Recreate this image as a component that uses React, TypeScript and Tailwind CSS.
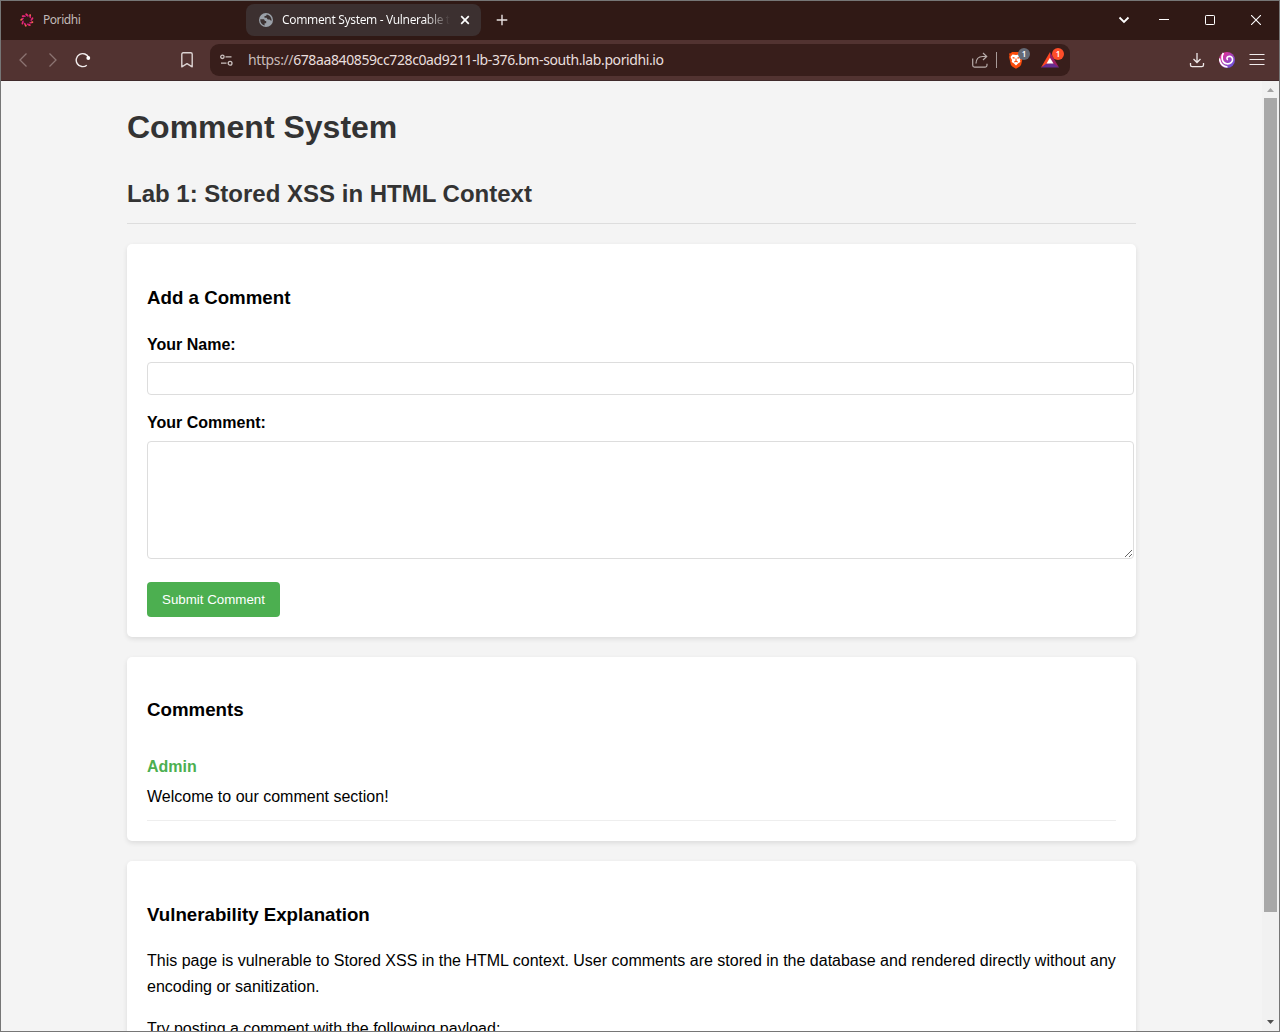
import React from "react";

const card = "mb-5 flow-root rounded-[5px] bg-white p-5 shadow-[0_2px_5px_rgba(0,0,0,0.1)]";

function PoridhiLogo() {
  return (
    <svg width="14" height="14" viewBox="0 0 14 14" className="shrink-0">
      {[0, 40, 80, 120, 160, 200, 240, 280, 320].map((a, i) => (
        <g key={a} transform={`rotate(${a} 7 7)`}>
          <path d="M6.100 1.200l.9.800" stroke={i % 2 ? "#f56a4a" : "#f0306a"} strokeWidth="1.700" strokeLinecap="round" />
          <path d="M7.300 2.300l.6.600" stroke="#d61a83" strokeWidth="1.500" strokeLinecap="round" />
        </g>
      ))}
    </svg>
  );
}

function Globe() {
  return (
    <svg width="14" height="14" viewBox="0 0 14 14" className="shrink-0">
      <circle cx="7" cy="7" r="7" fill="#9aa0a8" />
      <path d="M1.3 6.3h2.6c1.5 0 1.9.7 1.9 1.6h1.4v2.3H5.6v2.2C3 12 1.3 9.8 1.3 7.3zM7.7 1.4c-.1 1.3-.9 1.6-2.2 1.6v1.7h2.2c.3 1.2 1.1 1.9 2.2 1.9h.8c.3.8.9 1.1 1.9 1.1C12.700 4.500 10.500 1.700 7.700 1.400z" fill="#3c3232" />
    </svg>
  );
}

function TabStrip() {
  return (
    <div className="flex h-[39px] shrink-0 items-start bg-[#301915] text-[12px] text-white">
      <div className="flex h-[38px] w-[245px] items-center pl-[19px] text-[#c1b9b8]">
        <PoridhiLogo />
        <span className="ml-[9px] tracking-[-0.45px]">Poridhi</span>
      </div>
      <div className="mt-[3px] flex h-8 w-[235px] items-center rounded-lg bg-[#3c3030] pl-[13px]">
        <Globe />
        <span className="ml-[9px] w-[168px] overflow-hidden whitespace-nowrap bg-gradient-to-r from-white from-85% to-transparent bg-clip-text tracking-[-0.34px] text-transparent">
          Comment System - Vulnerable to XSS
        </span>
        <svg width="10" height="10" viewBox="0 0 10 10" className="ml-[10px]" stroke="#fff" strokeWidth="1.7">
          <path d="M1.200 1.200l7.600 7.600M8.800 1.200l-7.600 7.600" />
        </svg>
      </div>
      <svg width="12" height="12" viewBox="0 0 12 12" className="ml-[15px] mt-[13px]" stroke="#e8e2e1" strokeWidth="1.4">
        <path d="M6 .7v10.600M.7 6h10.600" />
      </svg>
      <div className="ml-auto flex h-[38px] items-center pr-[18px]">
        <svg width="12" height="8" viewBox="0 0 12 8" fill="none" stroke="#fff" strokeWidth="1.8" className="mr-[29px]">
          <path d="M1.500 1.500L6 6l4.500-4.500" />
        </svg>
        <svg width="10" height="12" viewBox="0 0 10 12" stroke="#fff" className="mr-9">
          <path d="M0 5.500h10" />
        </svg>
        <svg width="10" height="10" viewBox="0 0 10 10" fill="none" stroke="#fff" className="mr-9">
          <rect x=".5" y=".5" width="9" height="9" rx=".7" />
        </svg>
        <svg width="10" height="10" viewBox="0 0 10 10" stroke="#fff" strokeWidth="1.100">
          <path d="M0 0l10 10M10 0L0 10" />
        </svg>
      </div>
    </div>
  );
}

function BraveLion() {
  return (
    <svg width="16" height="18" viewBox="0 0 16 18">
      <path d="M4 1h8l1.200 1.200 1.800.3-.5 2 .4 1.500-1.700 7.500c-.3 1-1 1.700-1.800 2.200L8 17.700l-3.400-2c-.8-.5-1.500-1.200-1.800-2.200L1.100 6l.4-1.500-.5-2 1.800-.3z" fill="#fb4b0b" />
      <path d="M4.500 3.500L8 4l3.500-.5L13.500 6l-1.500 3 .3 2-2 1.200L8 14.500l-2.300-2.300-2-1.200.3-2L2.500 6z" fill="#fff" />
      <path d="M4.600 6.600l2 .5M11.400 6.600l-2 .5M8 7.500v2.200M6.300 11L8 10.200l1.700.8" stroke="#fb4b0b" strokeWidth="1.100" fill="none" />
    </svg>
  );
}

function Toolbar() {
  return (
    <div className="flex h-[41px] shrink-0 items-center border-b border-[#402a2b] bg-[#523331] pb-px">
      <svg width="10" height="14" viewBox="0 0 10 14" fill="none" stroke="#8c7472" strokeWidth="1.300" className="ml-[17px]">
        <path d="M8.500.5L2 7l6.500 6.500" />
      </svg>
      <svg width="10" height="14" viewBox="0 0 10 14" fill="none" stroke="#8c7472" strokeWidth="1.300" className="ml-5">
        <path d="M1.500.5L8 7l-6.500 6.500" />
      </svg>
      <svg width="16" height="16" viewBox="0 0 16 16" fill="none" className="ml-[17px]">
        <path d="M11.800 13.200A6.500 6.500 0 1 1 13.700 5.600" stroke="#f3eeee" strokeWidth="1.400" />
        <circle cx="13.300" cy="6" r="1.900" fill="#fff" />
      </svg>
      <svg width="12" height="16" viewBox="0 0 12 16" fill="none" stroke="#dcd3d2" strokeWidth="1.400" strokeLinejoin="round" className="ml-[90px]">
        <path d="M.8 2.200Q.8.8 2.200.8h7.600q1.400 0 1.400 1.400v12.600L6 11.600.8 14.800z" />
      </svg>
      <div className="ml-[17px] flex h-8 w-[860px] items-center rounded-[9px] bg-[#381e1b] pl-[10px]">
        <svg width="13" height="12" viewBox="0 0 13 12" fill="none" stroke="#cbc1bf" strokeWidth="1.300">
          <circle cx="2.400" cy="2.800" r="1.700" />
          <circle cx="10.100" cy="9.200" r="1.900" />
          <path d="M5.500 2.800h6M1 9.200h5.500" />
        </svg>
        <span className="ml-[15px] whitespace-nowrap text-[14px] tracking-[-0.39px] text-[#e9dfde]">
          <span className="text-[#c7bab8]">https://</span>678aa840859cc728c0ad9211-lb-376.bm-south.lab.poridhi.io
        </span>
        <div className="ml-auto flex items-center">
          <svg width="16" height="16" viewBox="0 0 16 16" fill="none" stroke="#b9adab" strokeWidth="1.200">
            <path d="M.7 6.500v6.800q0 1.800 1.800 1.800h10.700q1.800 0 1.800-1.800v-1.500" />
            <path d="M4 11.500c.2-4.500 2.500-7 6.500-7h3.500M11 1l3.700 3.500L11 8" />
          </svg>
          <div className="ml-[8px] h-[16px] w-px bg-[#a89b99]" />
          <div className="relative ml-[11px]">
            <BraveLion />
            <div className="absolute left-[10px] top-[-3px] flex h-3 w-3 items-center justify-center rounded-full bg-[#646975] text-[8px] font-semibold leading-none text-white">1</div>
          </div>
          <div className="relative ml-[17px] mr-[11px]">
            <svg width="18" height="16" viewBox="0 0 18 16">
              <path d="M9 0L0 15.500l9-4z" fill="#ff4724" />
              <path d="M9 0l9 15.500-9-4z" fill="#9e1f63" />
              <path d="M0 15.500h18l-5.500-4h-7z" fill="#662d91" />
              <path d="M9 5.700l3.500 5.900h-7z" fill="#fff" />
            </svg>
            <div className="absolute left-[11px] top-[-4px] flex h-3 w-3 items-center justify-center rounded-full bg-[#ff4d29] text-[8px] font-semibold leading-none text-white">1</div>
          </div>
        </div>
      </div>
      <svg width="16" height="16" viewBox="0 0 16 16" fill="none" stroke="#efe9e8" strokeWidth="1.300" className="ml-[119px]">
        <path d="M8 1v9.500M4.500 7L8 10.500 11.500 7M1.500 11v2q0 1.700 1.700 1.700h9.600q1.700 0 1.700-1.700v-2" />
      </svg>
      <svg width="16" height="16" viewBox="0 0 16 16" fill="none" className="ml-[14px]">
        <defs>
          <linearGradient id="swirl" x1="0" y1="0" x2="1" y2="1">
            <stop offset="0" stopColor="#fb2b88" />
            <stop offset="1" stopColor="#5457e8" />
          </linearGradient>
        </defs>
        <circle cx="8" cy="8" r="8" fill="url(#swirl)" />
        <path d="M4.500 1C1.800 4.500 2.800 11.200 8 11.800c3.800.3 6-2.300 5.500-5C13 4.600 10.500 3.800 8.900 4.800 7.500 5.700 7.700 7.500 9 7.800" stroke="#fff" strokeWidth="1.600" />
        <path d="M.3 6.500C1.200 11.500 4 14.900 8.500 15" stroke="#fff" strokeWidth="1.600" />
      </svg>
      <svg width="16" height="13" viewBox="0 0 16 13" className="ml-[14px]" stroke="#f1ecec" strokeWidth="1.200">
        <path d="M.5 1.500h15M.5 6.500h15M.5 11.500h15" />
      </svg>
    </div>
  );
}

function CommentForm() {
  return (
    <section className={card}>
      <h3 className="mb-[19.18px] mt-[18.72px] text-[18.72px] font-bold leading-[29.95px]">Add a Comment</h3>
      <label className="block font-bold" htmlFor="name">Your Name:</label>
      <input id="name" className="mt-[4.5px] block h-[33px] w-[987px] rounded border border-[#ddd] p-2 text-[13px]" />
      <label className="mt-[15px] block font-bold" htmlFor="comment">Your Comment:</label>
      <textarea id="comment" className="mt-[5px] block h-[118px] w-[987px] resize rounded border border-[#ddd] p-2" />
      <button className="mt-[23px] block h-[35px] w-[133px] rounded bg-[#4caf50] text-[13.333px] leading-[15px] text-white">
        Submit Comment
      </button>
    </section>
  );
}

function PageContent() {
  return (
    <main className="mx-auto flow-root w-[1009px] font-['Liberation_Sans',Arial,sans-serif] text-[16px] leading-[25.6px] text-black">
      <h1 className="mt-[21px] text-[32px] font-bold leading-[51.2px] text-[#333]">Comment System</h1>
      <h2 className="mb-5 mt-[21.44px] border-b border-[#ddd] pb-[10px] text-[24px] font-bold leading-[38.4px] text-[#333]">
        Lab 1: Stored XSS in HTML Context
      </h2>
      <CommentForm />
      <section className={card}>
        <h3 className="mb-[18.72px] mt-[18.72px] text-[18.72px] font-bold leading-[29.95px]">Comments</h3>
        <div className="border-b border-[#eee] py-[10px]">
          <div className="font-bold text-[#4caf50]">Admin</div>
          <div className="mt-[4.5px]">Welcome to our comment section!</div>
        </div>
      </section>
      <section className={card}>
        <h3 className="mb-[18.24px] mt-[19.2px] text-[18.72px] font-bold leading-[29.95px]">Vulnerability Explanation</h3>
        <p>
          This page is vulnerable to Stored XSS in the HTML context. User comments are stored in the database and
          rendered directly without any encoding or sanitization.
        </p>
        <p className="mt-[16.8px]">Try posting a comment with the following payload:</p>
      </section>
    </main>
  );
}

function Scrollbar() {
  return (
    <div className="flex w-[17px] shrink-0 flex-col items-center bg-[#f1f1f1] pr-px">
      <svg width="7" height="4" viewBox="0 0 7 4" className="mt-[7px] shrink-0">
        <path d="M3.500 0L7 4H0z" fill="#a3a3a3" />
      </svg>
      <div className="mt-[6px] h-[814px] w-[13px] shrink-0 bg-[#a8a8a8]" />
      <svg width="7" height="4" viewBox="0 0 7 4" className="mb-[7px] mt-auto shrink-0">
        <path d="M0 0h7L3.500 4z" fill="#505050" />
      </svg>
    </div>
  );
}

export default function App() {
  return (
    <div className="flex h-[1032px] w-[1280px] flex-col overflow-hidden border border-[#767676] bg-[#f4f4f4] font-['Noto_Sans','Open_Sans',sans-serif]">
      <TabStrip />
      <Toolbar />
      <div className="flex min-h-0 flex-1">
        <div className="min-w-0 flex-1 overflow-hidden">
          <PageContent />
        </div>
        <Scrollbar />
      </div>
    </div>
  );
}
